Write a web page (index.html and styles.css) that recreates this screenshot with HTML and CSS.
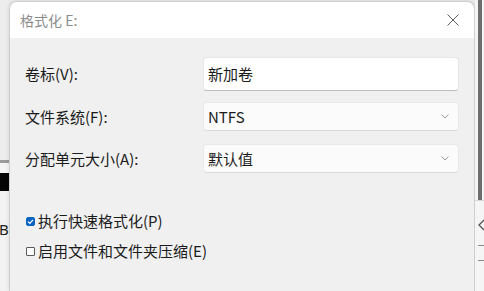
FILE: index.html
```html
<!DOCTYPE html>
<html lang="zh-CN">
<head>
<meta charset="utf-8">
<title>格式化 E:</title>
<link rel="stylesheet" href="styles.css">
</head>
<body>
<div class="screen">
  <div class="strip strip-left">
    <div class="sl-top"></div>
    <div class="sl-line"></div>
    <div class="sl-gap"></div>
    <div class="sl-black"></div>
    <div class="sl-mid"></div>
    <div class="sl-text">B</div>
  </div>

  <div class="dialog">
    <div class="titlebar">
      <span class="title">格式化 E:</span>
      <svg class="close" width="12" height="12" viewBox="0 0 12 12" aria-hidden="true">
        <path d="M0.5 0.5 L11.5 11.5 M11.5 0.5 L0.5 11.5" stroke="#5f5f5f" stroke-width="1" fill="none"/>
      </svg>
    </div>
    <div class="body">
      <div class="row row-1">
        <span class="label">卷标(V):</span>
        <div class="field textbox">新加卷</div>
      </div>
      <div class="row row-2">
        <span class="label">文件系统(F):</span>
        <div class="field select"><span>NTFS</span>
          <svg class="chev" width="8" height="5" viewBox="0 0 8 5" aria-hidden="true"><path d="M0.5 0.5 L4 4 L7.5 0.5" stroke="#9a9a9a" stroke-width="1" fill="none"/></svg>
        </div>
      </div>
      <div class="row row-3">
        <span class="label">分配单元大小(A):</span>
        <div class="field select"><span>默认值</span>
          <svg class="chev" width="8" height="5" viewBox="0 0 8 5" aria-hidden="true"><path d="M0.5 0.5 L4 4 L7.5 0.5" stroke="#9a9a9a" stroke-width="1" fill="none"/></svg>
        </div>
      </div>
      <div class="check check-1">
        <span class="box checked">
          <svg width="9" height="9" viewBox="0 0 9 9" aria-hidden="true"><path d="M2 4.6 L3.8 6.3 L7 2.8" stroke="#ffffff" stroke-width="1.2" fill="none"/></svg>
        </span>
        <span class="ctext">执行快速格式化(P)</span>
      </div>
      <div class="check check-2">
        <span class="box"></span>
        <span class="ctext">启用文件和文件夹压缩(E)</span>
      </div>
    </div>
  </div>

  <div class="strip strip-right">
    <div class="sr-top">
      <div class="sr-bar"></div>
    </div>
    <div class="sr-bottom">
      <svg class="sr-arrow" width="7" height="12" viewBox="0 0 7 12" aria-hidden="true"><path d="M6 1 L1 6 L6 11" stroke="#555" stroke-width="1.3" fill="none"/></svg>
      <span class="sr-dash"></span>
      <span class="sr-dash"></span>
    </div>
  </div>
</div>
</body>
</html>
```

FILE: styles.css
```css
html, body {
  margin: 0;
  padding: 0;
}
body {
  width: 484px;
  height: 291px;
  overflow: hidden;
  background: #ececec;
  font-family: "Noto Sans CJK SC", "Noto Sans", sans-serif;
  color: #1b1b1b;
}
.screen {
  display: flex;
  width: 484px;
  height: 291px;
}

/* left background strip */
.strip-left {
  width: 9px;
  flex: none;
  display: flex;
  flex-direction: column;
  background: #f2f2f2;
}
.sl-top { height: 160px; background: #ededed; }
.sl-line { height: 3px; background: #9c9c9c; }
.sl-gap { height: 10px; background: #f4f4f4; }
.sl-black { height: 18px; background: #050505; }
.sl-mid { height: 30px; background: #f3f3f3; }
.sl-text {
  font-family: "Noto Sans", sans-serif;
  font-size: 15px;
  line-height: 16px;
  margin-left: -1px;
  color: #222;
}

/* dialog */
.dialog {
  width: 466px;
  flex: none;
  margin-top: 1px;
  box-sizing: border-box;
  border: 1px solid #cfcfcf;
  border-bottom: none;
  border-radius: 8px 8px 0 0;
  background: #f0f0f0;
  box-shadow: 0 0 4px rgba(0,0,0,0.12);
  display: flex;
  flex-direction: column;
  overflow: hidden;
}
.titlebar {
  height: 36px;
  background: #ffffff;
  display: flex;
  align-items: center;
  justify-content: space-between;
  padding: 0 15px 0 10px;
  flex: none;
}
.title {
  font-size: 14px;
  line-height: 16px;
  color: #8c8c8c;
}
.close { display: block; }

.body {
  display: flex;
  flex-direction: column;
  padding: 0 15px 0 15px;
}
.row {
  display: flex;
  align-items: center;
}
.row-1 { margin-top: 19px; height: 34px; }
.row-2 { margin-top: 11px; height: 29px; }
.row-3 { margin-top: 13px; height: 29px; }
.label {
  width: 178px;
  flex: none;
  font-size: 15px;
  line-height: 18px;
}
.field {
  box-sizing: border-box;
  width: 256px;
  height: 100%;
  display: flex;
  align-items: center;
  justify-content: space-between;
  padding: 0 9px 0 4px;
  font-size: 15px;
  line-height: 18px;
  border-radius: 4px;
}
.textbox {
  background: #ffffff;
  border: 1px solid #e6e6e6;
  border-bottom-color: #bdbdbd;
}
.select {
  background: #fbfbfb;
  border: 1px solid #e9e9e9;
  border-bottom-color: #dadada;
}
.chev { display: block; }

.check {
  display: flex;
  align-items: center;
  height: 20px;
}
.check-1 { margin-top: 38px; }
.check-2 { margin-top: 10px; }
.box {
  box-sizing: border-box;
  width: 9px;
  height: 9px;
  margin-left: 1px;
  margin-right: 3px;
  border: 1px solid #5a5a5a;
  border-radius: 1px;
  background: #fdfdfd;
  display: flex;
}
.box.checked {
  background: #0a64c4;
  border-color: #0a64c4;
  border-radius: 2px;
}
.box svg { margin: -1px; display: block; }
.ctext {
  font-size: 15px;
  line-height: 18px;
}

/* right background strip */
.strip-right {
  width: 9px;
  flex: none;
  display: flex;
  flex-direction: column;
  background: #f5f5f5;
}
.sr-top {
  height: 200px;
  display: flex;
  padding-left: 3px;
  border-bottom: 1px solid #d6d6d6;
}
.sr-bar {
  width: 4px;
  height: 100%;
  background: #6e6e6e;
}
.sr-bottom {
  display: flex;
  flex-direction: column;
  align-items: flex-start;
  padding-left: 3px;
}
.sr-arrow {
  display: block;
  margin-top: 18px;
}
.sr-dash {
  width: 6px;
  height: 1px;
  background: #8a8a8a;
  margin-top: 14px;
}
```
